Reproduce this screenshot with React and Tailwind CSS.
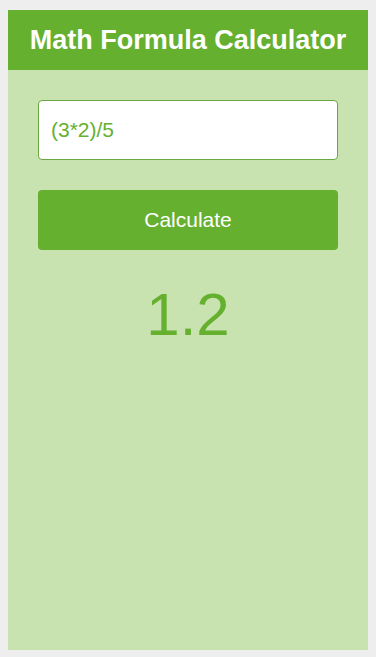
import { useState } from "react";

export default function App() {
  const [formula, setFormula] = useState("(3*2)/5");
  const [result, setResult] = useState("1.2");

  const calculate = () => {
    try {
      // only digits and operators get through
      if (!/^[\d+\-*/().\s]+$/.test(formula)) throw new Error("bad");
      const v = Function(`return (${formula})`)();
      setResult(String(v));
    } catch {
      setResult("Error");
    }
  };

  return (
    <div
      className="min-h-screen bg-[#eeeeee] pt-[10px] px-2"
      style={{ fontFamily: '"Liberation Sans", Arial, sans-serif' }}
    >
      <div className="h-[640px] bg-[#c8e3b0] flex flex-col">
        <div className="h-[60px] bg-[#66b030] flex items-center justify-center">
          <h1 className="text-[27px] font-bold text-white">
            Math Formula Calculator
          </h1>
        </div>

        <div className="px-[30px] pt-[30px] flex flex-col">
          <input
            type="text"
            value={formula}
            onChange={(e) => setFormula(e.target.value)}
            className="h-[60px] w-full bg-white border border-[#6aa842] rounded-[4px] px-3 text-[21px] text-[#66b030] outline-none"
          />
          <button
            onClick={calculate}
            className="mt-[30px] h-[60px] w-full bg-[#66b030] rounded-[4px] text-white text-[21px]"
          >
            Calculate
          </button>
          <div className="mt-[30px] text-center text-[60px] leading-[1.15] text-[#66b030]">
            {result}
          </div>
        </div>
      </div>
    </div>
  );
}
